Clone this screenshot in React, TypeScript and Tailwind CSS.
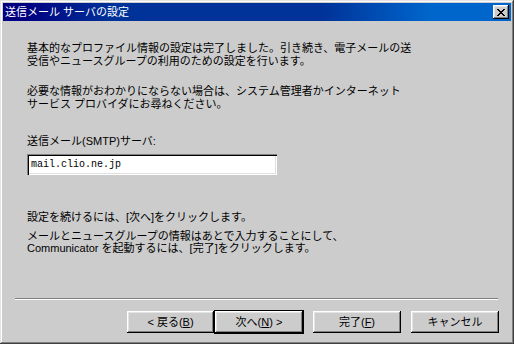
import React from 'react'

const font = 'font-["Liberation_Sans","Noto_Sans_CJK_JP",sans-serif]'

const bevel =
  'shadow-[inset_-1px_-1px_#000000,inset_1px_1px_#ffffff,inset_-2px_-2px_#808080,inset_2px_2px_#e4e4e4]'

const Button = ({
  label,
  hot,
  rest = '',
  before = '',
  isDefault = false,
  width,
}: {
  label?: string
  hot?: string
  rest?: string
  before?: string
  isDefault?: boolean
  width: string
}) => (
  <div className={`${width} ${isDefault ? 'h-[24px] border border-black' : 'h-[22px]'} flex`}>
    <button
      className={`flex-1 ${bevel} bg-[#cccccc] text-[11px] leading-none text-black flex items-center justify-center`}
    >
      {label ?? (
        <span>
          {before}
          {'('}
          <span className="underline underline-offset-1">{hot}</span>
          {')'}
          {rest}
        </span>
      )}
    </button>
  </div>
)

export default function App() {
  return (
    <div
      className={`w-[514px] h-[344px] bg-[#cccccc] p-[3px] flex flex-col ${font} text-black shadow-[inset_-1px_-1px_#404040,inset_1px_1px_#e4e4e4,inset_-2px_-2px_#808080,inset_2px_2px_#ffffff]`}
    >
      {/* title bar */}
      <div className="h-[18px] flex items-center justify-between pl-[2px] pr-[2px] bg-[linear-gradient(to_right,#000080_4%,#003399_22%,#003399_63%,#0066cc_84%)]">
        <span className="text-white text-[11px] leading-none">送信メール サーバの設定</span>
        <div className={`w-[16px] h-[14px] bg-[#cccccc] ${bevel} flex items-center justify-center`}>
          <svg width="8" height="7" viewBox="0 0 8 7" shapeRendering="crispEdges">
            <path
              d="M0 0h2v1H0zM6 0h2v1H6zM1 1h2v1H1zM5 1h2v1H5zM2 2h4v1H2zM3 3h2v1H3zM2 4h4v1H2zM1 5h2v1H1zM5 5h2v1H5zM0 6h2v1H0zM6 6h2v1H6z"
              fill="#000"
            />
          </svg>
        </div>
      </div>

      {/* body */}
      <div className="flex-1 flex flex-col pl-[24px] text-[11px] leading-[13px]">
        <p className="mt-[21px]">
          基本的なプロファイル情報の設定は完了しました。引き続き、電子メールの送
          <br />
          受信やニュースグループの利用のための設定を行います。
        </p>
        <p className="mt-[17px]">
          必要な情報がおわかりにならない場合は、システム管理者かインターネット
          <br />
          サービス プロバイダにお尋ねください。
        </p>
        <p className="mt-[24px]">送信メール(SMTP)サーバ:</p>
        <div className="mt-[6px] w-[250px] h-[21px] bg-white flex items-center pl-[4px] shadow-[inset_1px_1px_#808080,inset_2px_2px_#000000,inset_-1px_-1px_#ffffff,inset_-2px_-2px_#dfdfdf]">
          <span className='font-["Liberation_Mono",monospace] text-[10px] leading-none text-black'>mail.clio.ne.jp</span>
        </div>
        <p className="mt-[36px]">設定を続けるには、[次へ]をクリックします。</p>
        <p className="mt-[6px] leading-[12px]">
          メールとニュースグループの情報はあとで入力することにして、
          <br />
          Communicator を起動するには、[完了]をクリックします。
        </p>
      </div>

      {/* separator */}
      <div className="ml-[12px] mr-[13px] h-[2px] border-t border-b border-t-[#808080] border-b-white" />

      {/* buttons */}
      <div className="h-[35px] flex items-start justify-end pr-[12px] pt-[10px] mb-[6px]">
        <div className="flex items-center">
          <Button width="w-[87px]" before="< 戻る" hot="B" />
          <Button width="w-[90px]" before="次へ" hot="N" rest=" >" isDefault />
          <div className="w-[9px]" />
          <Button width="w-[88px]" before="完了" hot="F" />
          <div className="w-[10px]" />
          <Button width="w-[88px]" label="キャンセル" />
        </div>
      </div>
    </div>
  )
}
